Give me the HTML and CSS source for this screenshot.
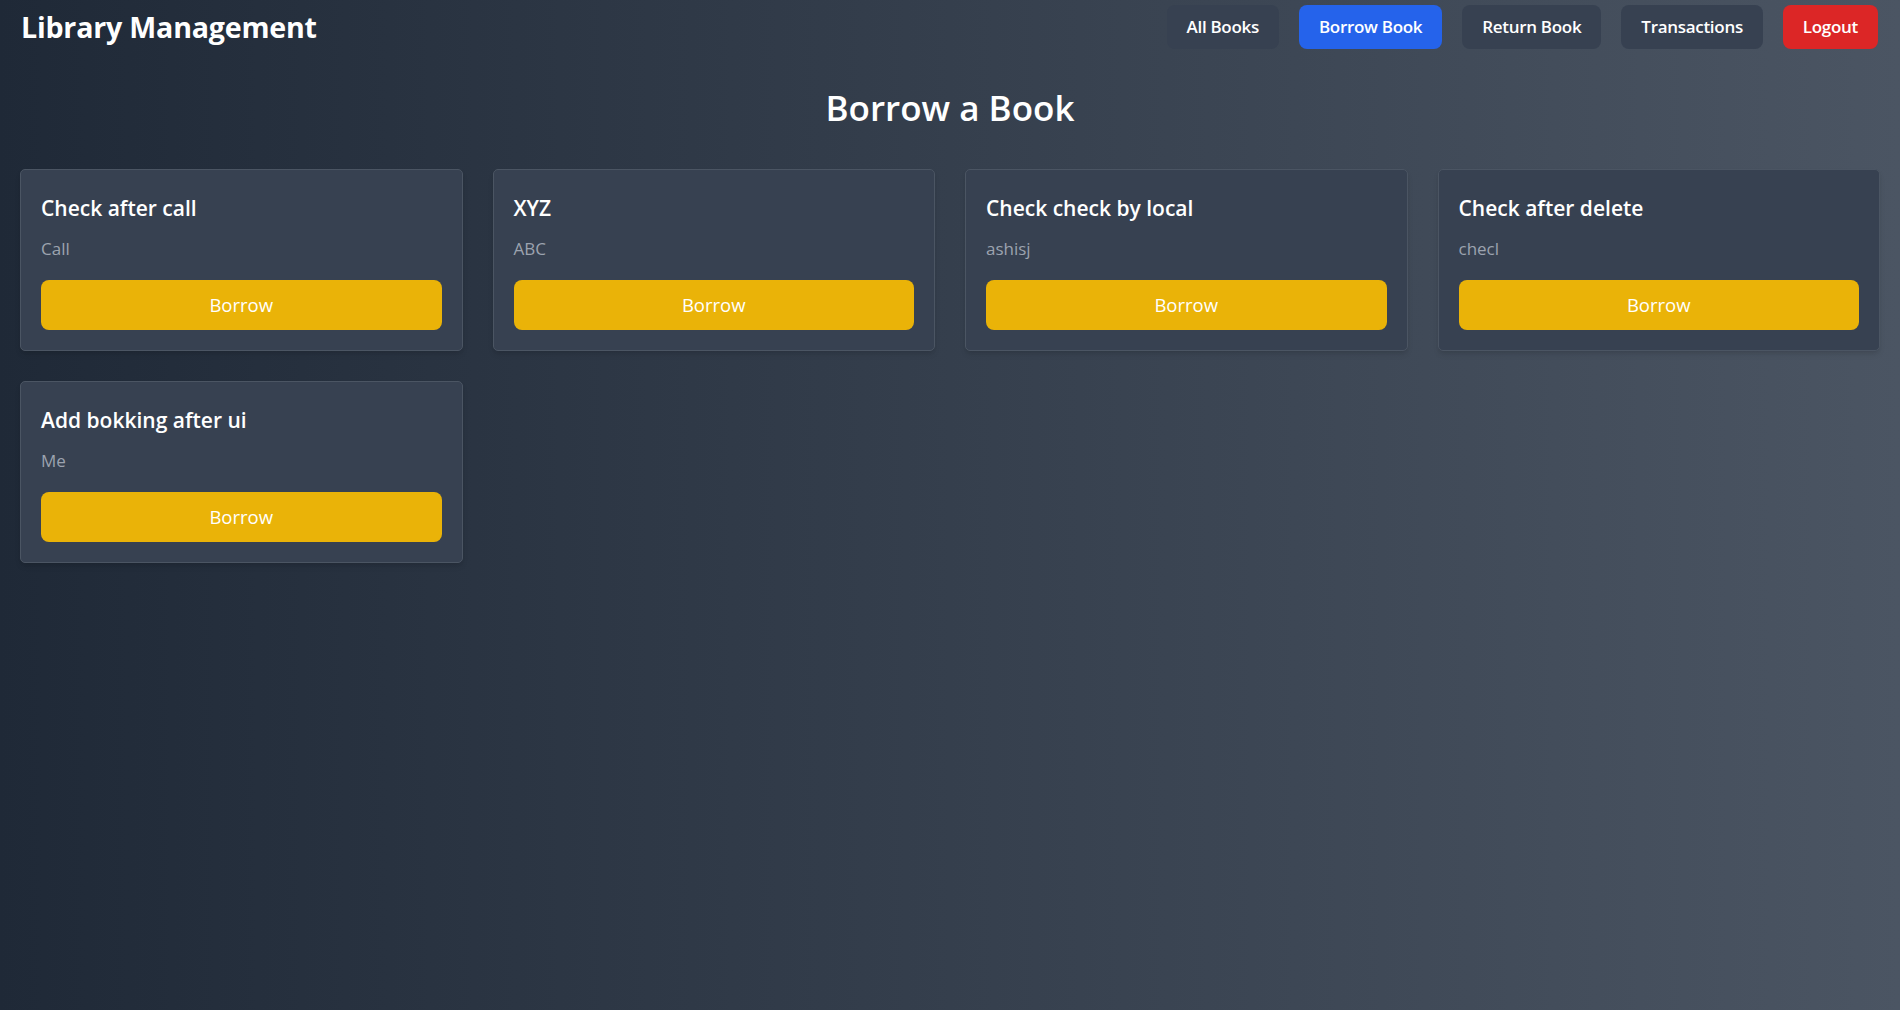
FILE: index.html
```html
<!DOCTYPE html>
<html lang="en">
<head>
<meta charset="utf-8">
<title>Library Management</title>
<link rel="stylesheet" href="styles.css">
</head>
<body>
<div class="app">
  <header class="topbar">
    <div class="brand">Library Management</div>
    <nav class="nav">
      <button class="nav-btn">All Books</button>
      <button class="nav-btn active">Borrow Book</button>
      <button class="nav-btn">Return Book</button>
      <button class="nav-btn">Transactions</button>
      <button class="nav-btn logout">Logout</button>
    </nav>
  </header>
  <main class="content">
    <h1 class="page-title">Borrow a Book</h1>
    <div class="grid">
      <div class="card">
        <h2 class="card-title">Check after call</h2>
        <p class="card-author">Call</p>
        <button class="borrow-btn">Borrow</button>
      </div>
      <div class="card">
        <h2 class="card-title">XYZ</h2>
        <p class="card-author">ABC</p>
        <button class="borrow-btn">Borrow</button>
      </div>
      <div class="card">
        <h2 class="card-title">Check check by local</h2>
        <p class="card-author">ashisj</p>
        <button class="borrow-btn">Borrow</button>
      </div>
      <div class="card">
        <h2 class="card-title">Check after delete</h2>
        <p class="card-author">checl</p>
        <button class="borrow-btn">Borrow</button>
      </div>
      <div class="card">
        <h2 class="card-title">Add bokking after ui</h2>
        <p class="card-author">Me</p>
        <button class="borrow-btn">Borrow</button>
      </div>
    </div>
  </main>
</div>
</body>
</html>
```

FILE: styles.css
```css
* { box-sizing: border-box; }
html, body { margin: 0; padding: 0; }
body {
  font-family: "Open Sans", "Noto Sans", sans-serif;
  color: #ffffff;
  background: linear-gradient(to right, #1f2937, #4b5563);
  min-height: 100vh;
}
.app { min-height: 100vh; }
.topbar {
  display: flex;
  justify-content: space-between;
  align-items: center;
  padding: 5px 22px 0 21px;
}
.brand {
  font-size: 28.6px;
  font-weight: 700;
  line-height: 36px;
  letter-spacing: -0.2px;
}
.nav {
  display: flex;
  gap: 20px;
}
.nav-btn {
  font-family: inherit;
  font-size: 17px;
  font-weight: 600;
  line-height: 28px;
  padding: 8px 20px;
  border: none;
  border-radius: 8px;
  background: #374151;
  color: #ffffff;
  letter-spacing: -0.3px;
}
.nav-btn.active { background: #2563eb; }
.nav-btn.logout { background: #dc2626; }
.content {
  padding: 0 20px 20px;
}
.page-title {
  margin: 39px 0 41px;
  text-align: center;
  font-size: 35px;
  font-weight: 600;
  line-height: 40px;
}
.grid {
  display: grid;
  grid-template-columns: repeat(4, 1fr);
  column-gap: 30px;
  row-gap: 30px;
}
.card {
  background: #374151;
  border: 1px solid #4b5563;
  border-radius: 5px;
  padding: 20px;
  box-shadow: 0 4px 6px -1px rgba(0,0,0,0.1), 0 2px 4px -2px rgba(0,0,0,0.1);
}
.card-title {
  margin: 0 0 11px;
  padding-top: 2px;
  font-size: 21px;
  font-weight: 600;
  line-height: 32px;
}
.card-author {
  margin: 0 0 17px;
  font-size: 17px;
  font-weight: 400;
  line-height: 28px;
  color: #9ca3af;
}
.borrow-btn {
  display: block;
  width: 100%;
  font-family: inherit;
  font-size: 18.5px;
  line-height: 28px;
  padding: 11px 16px;
  border: none;
  border-radius: 8px;
  background: #eab308;
  color: #ffffff;
}
```
